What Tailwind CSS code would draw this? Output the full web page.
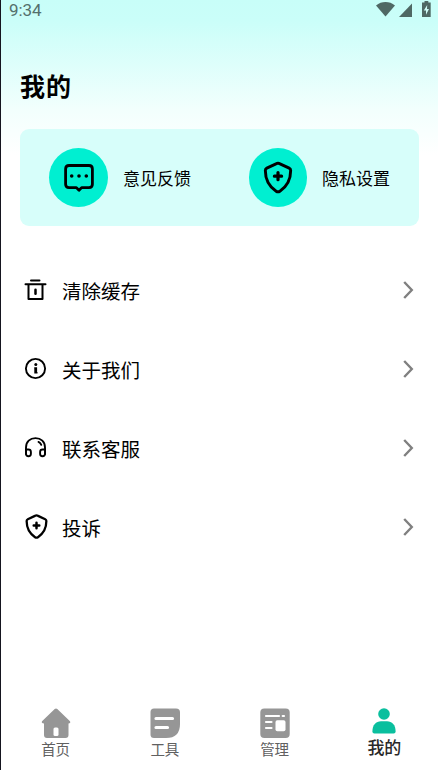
<!DOCTYPE html>
<html lang="zh-CN">
<head>
<meta charset="utf-8">
<title>我的</title>
<script src="https://cdn.jsdelivr.net/npm/@tailwindcss/browser@4"></script>
</head>
<body class="bg-white">
<svg class="hidden">
  <symbol id="shield" viewBox="0 0 24 26">
    <path d="M12 2.3Q11.2 2.3 10.5 2.8L3.6 6Q2.5 6.5 2.5 7.8C2.5 13.5 4.5 19.3 10.6 23.3Q12 24.2 13.4 23.3C19.5 19.3 21.5 13.5 21.5 7.8Q21.5 6.5 20.4 6L13.5 2.8Q12.8 2.3 12 2.3Z" fill="none" stroke="#000" stroke-width="2.2" stroke-linejoin="round"/>
    <path d="M12 9.3V14.7M9.3 12H14.7" stroke="#000" stroke-width="2.4" stroke-linecap="round"/>
  </symbol>
  <symbol id="chevron" viewBox="0 0 12 20">
    <path d="M2.2 2L9.8 10L2.2 18" fill="none" stroke="#808080" stroke-width="2.4"/>
  </symbol>
</svg>
<div class="w-[438px] h-[770px] flex flex-col overflow-hidden border-l border-[#15151f] bg-[linear-gradient(to_bottom,#c8fef8_0px,#cafef9_20px,#f2fffd_110px,#ffffff_155px)] bg-white text-black font-['Noto_Sans_CJK_SC',sans-serif]">
  <header class="h-5 shrink-0 flex items-center justify-between pl-2 text-[#54706c]">
    <span class="font-[Roboto,sans-serif] text-[17px] leading-5 tracking-[-0.1px]">9:34</span>
    <svg class="w-[62px] h-5" viewBox="376 0 62 20" fill="#4f6864">
      <path d="M376 5.5C381.5 .9 389.5 .9 395 5.5L385.5 16.5Z"/>
      <path d="M412 3.5V17H399Z"/>
      <path d="M424.5 1H428.3V2.5H430.7V17H422V2.5H424.5Z"/>
      <path d="M427.2 5L423.8 10.6H426V14.8L429 9H427Z" fill="#d0fcf7"/>
    </svg>
  </header>
  <h1 class="mt-[47px] ml-[19px] h-9 shrink-0 text-[25px] leading-9 font-bold tracking-[1px]">我的</h1>
  <section class="mt-[26px] ml-[19.4px] mr-[18.6px] h-[97px] shrink-0 rounded-[9px] bg-[#d7fefa] grid grid-cols-2 items-center text-[17px]">
    <div class="flex items-center pl-[29px] gap-[15px]">
      <div class="size-[58.5px] rounded-full bg-[#00efd1] flex items-center justify-center">
        <svg class="w-[30px] h-[30px]" viewBox="0 0 30 30">
          <path d="M5 2.5H25Q28.4 2.5 28.4 5.9V21.2Q28.4 24.6 25 24.6H17.6L15 27.3L12.4 24.6H5Q1.6 24.6 1.6 21.2V5.9Q1.6 2.5 5 2.5Z" fill="none" stroke="#000" stroke-width="2.8" stroke-linejoin="round"/>
          <g><circle cx="7.7" cy="13" r="1.8"/><circle cx="15" cy="13" r="1.8"/><circle cx="22.3" cy="13" r="1.8"/></g>
        </svg>
      </div>
      <span>意见反馈</span>
    </div>
    <div class="flex items-center pl-[29px] gap-[14.5px]">
      <div class="size-[58.5px] rounded-full bg-[#00efd1] flex items-center justify-center">
        <svg class="w-[32px] h-[35px]"><use href="#shield"/></svg>
      </div>
      <span>隐私设置</span>
    </div>
  </section>
  <main class="mt-6 flex-1 pl-[23px] pr-6 text-[19.5px]">
    <div class="h-[79px] flex items-center">
      <svg class="w-6 h-6" viewBox="24 278 24 24" fill="none" stroke="#000" stroke-width="2" stroke-linecap="round" stroke-linejoin="round">
        <path d="M31 280.5H39.5M25.5 284.3H45.5M28.5 284.5V299H42.5V284.5"/>
        <path d="M35.5 289.8V293.8" stroke-width="2.5"/>
      </svg>
      <span class="ml-3.5 flex-1 pt-0.5">清除缓存</span>
      <svg class="w-3 h-5"><use href="#chevron"/></svg>
    </div>
    <div class="h-[79px] flex items-center">
      <svg class="w-6 h-6" viewBox="0 0 24 24">
        <circle cx="11.5" cy="11.5" r="9.6" fill="none" stroke="#000" stroke-width="1.9"/>
        <circle cx="11.8" cy="7.5" r="1.5"/>
        <path d="M10.2 10.2H13.1V15.1H13.5V16.4H10.3V11.5H10.2Z"/>
      </svg>
      <span class="ml-3.5 flex-1 pt-0.5">关于我们</span>
      <svg class="w-3 h-5"><use href="#chevron"/></svg>
    </div>
    <div class="h-[79px] flex items-center">
      <svg class="w-6 h-6" viewBox="0 -.5 24 24" fill="none" stroke="#000" stroke-width="1.9" stroke-linecap="round" stroke-linejoin="round">
        <path d="M2 17.5V11C2 5.2 6 1.6 11.5 1.6S21 5.2 21 11V17.5"/>
        <path d="M2 13H4.4Q6.9 13 6.9 15.4V17.3Q6.9 19.8 4.5 19.8T2 17.3ZM21 13H18.6Q16.1 13 16.1 15.4V17.3Q16.1 19.8 18.5 19.8T21 17.3Z"/>
        <path d="M14.5 5.4Q16.5 6.3 17.3 8.3"/>
      </svg>
      <span class="ml-3.5 flex-1 pt-0.5">联系客服</span>
      <svg class="w-3 h-5"><use href="#chevron"/></svg>
    </div>
    <div class="h-[79px] flex items-center">
      <svg class="w-[25px] h-[27px]"><use href="#shield"/></svg>
      <span class="ml-[13px] flex-1 pt-0.5">投诉</span>
      <svg class="w-3 h-5"><use href="#chevron"/></svg>
    </div>
  </main>
  <nav class="h-[64px] shrink-0 grid grid-cols-4 text-[14.5px] leading-5 text-[#606060] text-center">
    <div class="flex flex-col items-center pt-0.5">
      <svg class="w-[30px] h-[30px]" viewBox="0 0 30 30" fill="#969696">
        <path d="M13.7 1Q15 0 16.3 1L29 13.3Q30 15.3 27.5 15.5V27Q27.5 30 24.5 30H6Q3 30 3 27V15.5Q0 15.3 1 13.3Z"/>
        <rect x="12.5" y="19.5" width="5" height="8.5" rx="1.5" fill="#fff"/>
      </svg>
      <span class="mt-px">首页</span>
    </div>
    <div class="flex flex-col items-center pt-0.5">
      <svg class="w-[30px] h-[30px]" viewBox="0 0 30 30">
        <path d="M4 .5H26Q30 .5 30 4.5V16Q30 30 16 30H4Q.5 30 .5 26.5V4Q.5 .5 4 .5Z" fill="#969696"/>
        <path d="M6 10.5H22.5M6 19.5H17.5" stroke="#fff" stroke-width="3.2" stroke-linecap="round"/>
      </svg>
      <span class="mt-px">工具</span>
    </div>
    <div class="flex flex-col items-center pt-0.5 pl-px">
      <svg class="w-[30px] h-[30px]" viewBox="0 0 30 30">
        <rect x=".3" y=".5" width="29.4" height="29.5" rx="4" fill="#969696"/>
        <path d="M6 8H19M22.7 8H24M6 14H11.5M6 20H11.5" stroke="#fff" stroke-width="2.2" stroke-linecap="round"/>
        <rect x="15.5" y="12.3" width="10" height="11" rx="1.8" fill="#fff"/>
      </svg>
      <span class="mt-px">管理</span>
    </div>
    <div class="flex flex-col items-center pt-0.5 pl-0.5 text-[17px] leading-6 font-medium text-[#292929]">
      <svg class="w-6 h-[26px]" viewBox="0 0 24 26" fill="#0abf9e">
        <circle cx="12" cy="6" r="5.8"/>
        <path d="M.4 23.5C.4 17 4 13.3 9 13.3H15C20 13.3 23.6 17 23.6 23.5Q23.6 25.5 21.6 25.5H2.4Q.4 25.5 .4 23.5Z"/>
      </svg>
      <span class="mt-px">我的</span>
    </div>
  </nav>
</div>
</body>
</html>
